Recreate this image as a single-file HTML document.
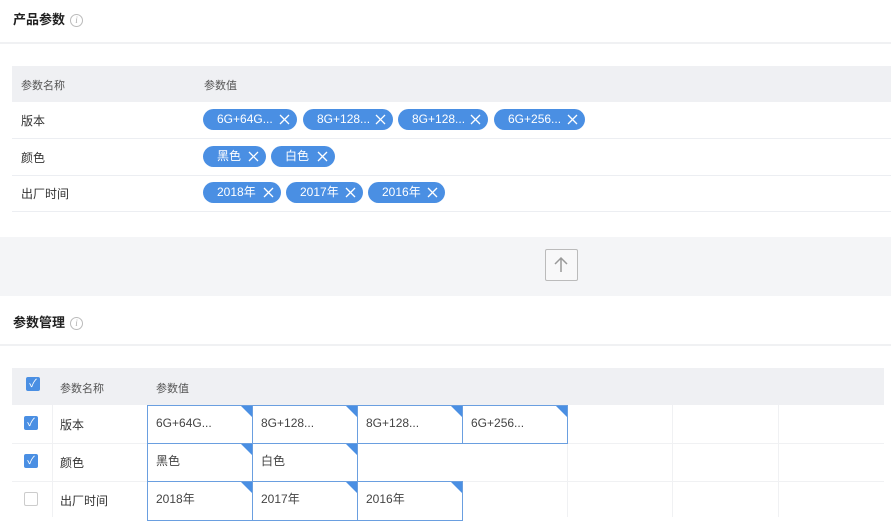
<!DOCTYPE html>
<html><head><meta charset="utf-8"><style>
*{margin:0;padding:0;box-sizing:border-box}
body{width:891px;height:517px;overflow:hidden;background:#fff;font-family:"Liberation Sans","Noto Sans CJK SC",sans-serif;color:#333;position:relative;font-size:12px}
.abs{position:absolute}
.title{font-size:13px;font-weight:bold;color:#222}
.info{display:inline-block;width:13px;height:13px;border:1px solid #bbb;border-radius:50%;font-size:9px;color:#aaa;text-align:center;line-height:11px;font-style:italic;vertical-align:1px;margin-left:5px;font-family:"Liberation Serif",serif;font-weight:normal}
.tag{position:absolute;height:21px;background:#4a8fe3;border-radius:11px;color:#fff;font-size:12px;line-height:21px;padding-left:14px}
.tag svg{position:absolute;right:7px;top:5px}
.cell{position:absolute;border:1px solid #6a9fe0;font-size:12px;color:#444;padding-left:8px;line-height:34px;background:#fff}
.cell:after{content:"";position:absolute;right:0;top:0;border-top:11px solid #4a8fe3;border-left:11px solid transparent}
.cb{position:absolute;width:14px;height:14px;border-radius:2px;background:#4a8fe3;color:#fff;font-size:11px;line-height:14px;text-align:center}
.row{position:absolute;left:12px;width:879px;border-bottom:1px solid #eceef2;font-size:12px}
</style></head><body>
<svg width="0" height="0" style="position:absolute"><defs><symbol id="x" viewBox="0 0 11 11"><path d="M1 1L10 10M10 1L1 10" stroke="#fff" stroke-width="1.3"/></symbol></defs></svg>
<div class="abs title" style="left:13px;top:9px">产品参数<span class="info">i</span></div>
<div class="abs" style="left:0;top:42px;width:891px;height:2px;background:#f0f1f3"></div>
<div class="abs" style="left:12px;top:66px;width:879px;height:36px;background:#eff0f3"></div>
<div class="abs" style="left:21px;top:77px;font-size:11px;color:#555">参数名称</div>
<div class="abs" style="left:204px;top:77px;font-size:11px;color:#555">参数值</div>
<div class="row" style="top:102px;height:37px"><span class="abs" style="left:9px;top:10px">版本</span></div>
<div class="row" style="top:139px;height:37px"><span class="abs" style="left:9px;top:10px">颜色</span></div>
<div class="row" style="top:176px;height:36px"><span class="abs" style="left:9px;top:9px">出厂时间</span></div>
<div class="tag" style="left:203px;top:109px;width:94px">6G+64G...<svg width="11" height="11"><use href="#x"/></svg></div>
<div class="tag" style="left:303px;top:109px;width:90px">8G+128...<svg width="11" height="11"><use href="#x"/></svg></div>
<div class="tag" style="left:398px;top:109px;width:90px">8G+128...<svg width="11" height="11"><use href="#x"/></svg></div>
<div class="tag" style="left:494px;top:109px;width:91px">6G+256...<svg width="11" height="11"><use href="#x"/></svg></div>
<div class="tag" style="left:203px;top:146px;width:63px">黑色<svg width="11" height="11"><use href="#x"/></svg></div>
<div class="tag" style="left:271px;top:146px;width:64px">白色<svg width="11" height="11"><use href="#x"/></svg></div>
<div class="tag" style="left:203px;top:182px;width:78px">2018年<svg width="11" height="11"><use href="#x"/></svg></div>
<div class="tag" style="left:286px;top:182px;width:77px">2017年<svg width="11" height="11"><use href="#x"/></svg></div>
<div class="tag" style="left:368px;top:182px;width:77px">2016年<svg width="11" height="11"><use href="#x"/></svg></div>
<div class="abs" style="left:0;top:237px;width:891px;height:59px;background:#f4f5f7"></div>
<div class="abs" style="left:545px;top:249px;width:33px;height:32px;border:1.5px solid #bbb;border-radius:2px;background:#f8f8f9">
<svg width="30" height="29" viewBox="0 0 30 29"><path d="M15 22V8M9 14l6-6 6 6" fill="none" stroke="#999" stroke-width="1.5"/></svg></div>
<div class="abs title" style="left:13px;top:312px">参数管理<span class="info">i</span></div>
<div class="abs" style="left:0;top:344px;width:891px;height:2px;background:#f0f1f3"></div>
<div class="abs" style="left:12px;top:368px;width:872px;height:37px;background:#eff0f3"></div>
<div class="cb" style="left:26px;top:377px">✓</div>
<div class="abs" style="left:60px;top:380px;font-size:11px;color:#555">参数名称</div>
<div class="abs" style="left:156px;top:380px;font-size:11px;color:#555">参数值</div>
<div class="abs" style="left:12px;top:405px;width:872px;height:112px;background:#fff"></div>
<div class="abs" style="left:12px;top:443px;width:872px;height:1px;background:#f0f1f3"></div>
<div class="abs" style="left:12px;top:481px;width:872px;height:1px;background:#f0f1f3"></div>
<div class="abs" style="left:52px;top:405px;width:1px;height:112px;background:#f0f1f3"></div>
<div class="abs" style="left:672px;top:405px;width:1px;height:112px;background:#f0f1f3"></div>
<div class="abs" style="left:778px;top:405px;width:1px;height:112px;background:#f0f1f3"></div>
<div class="abs" style="left:567px;top:443px;width:1px;height:74px;background:#f0f1f3"></div>
<div class="abs" style="left:462px;top:481px;width:1px;height:36px;background:#f0f1f3"></div>
<div class="cb" style="left:24px;top:416px">✓</div>
<div class="cb" style="left:24px;top:454px">✓</div>
<div class="abs" style="left:24px;top:492px;width:14px;height:14px;border:1px solid #ccc;border-radius:2px"></div>
<div class="abs" style="left:60px;top:416px">版本</div>
<div class="abs" style="left:60px;top:454px">颜色</div>
<div class="abs" style="left:60px;top:492px">出厂时间</div>
<div class="cell" style="left:147px;top:405px;width:106px;height:39px">6G+64G...</div>
<div class="cell" style="left:252px;top:405px;width:106px;height:39px">8G+128...</div>
<div class="cell" style="left:357px;top:405px;width:106px;height:39px">8G+128...</div>
<div class="cell" style="left:462px;top:405px;width:106px;height:39px">6G+256...</div>
<div class="cell" style="left:147px;top:443px;width:106px;height:39px">黑色</div>
<div class="cell" style="left:252px;top:443px;width:106px;height:39px">白色</div>
<div class="cell" style="left:147px;top:481px;width:106px;height:40px">2018年</div>
<div class="cell" style="left:252px;top:481px;width:106px;height:40px">2017年</div>
<div class="cell" style="left:357px;top:481px;width:106px;height:40px">2016年</div>
<div class="abs" style="left:357px;top:443px;width:106px;height:39px;border:1px solid #6a9fe0;border-top:none;border-right:none"></div>
</body></html>
